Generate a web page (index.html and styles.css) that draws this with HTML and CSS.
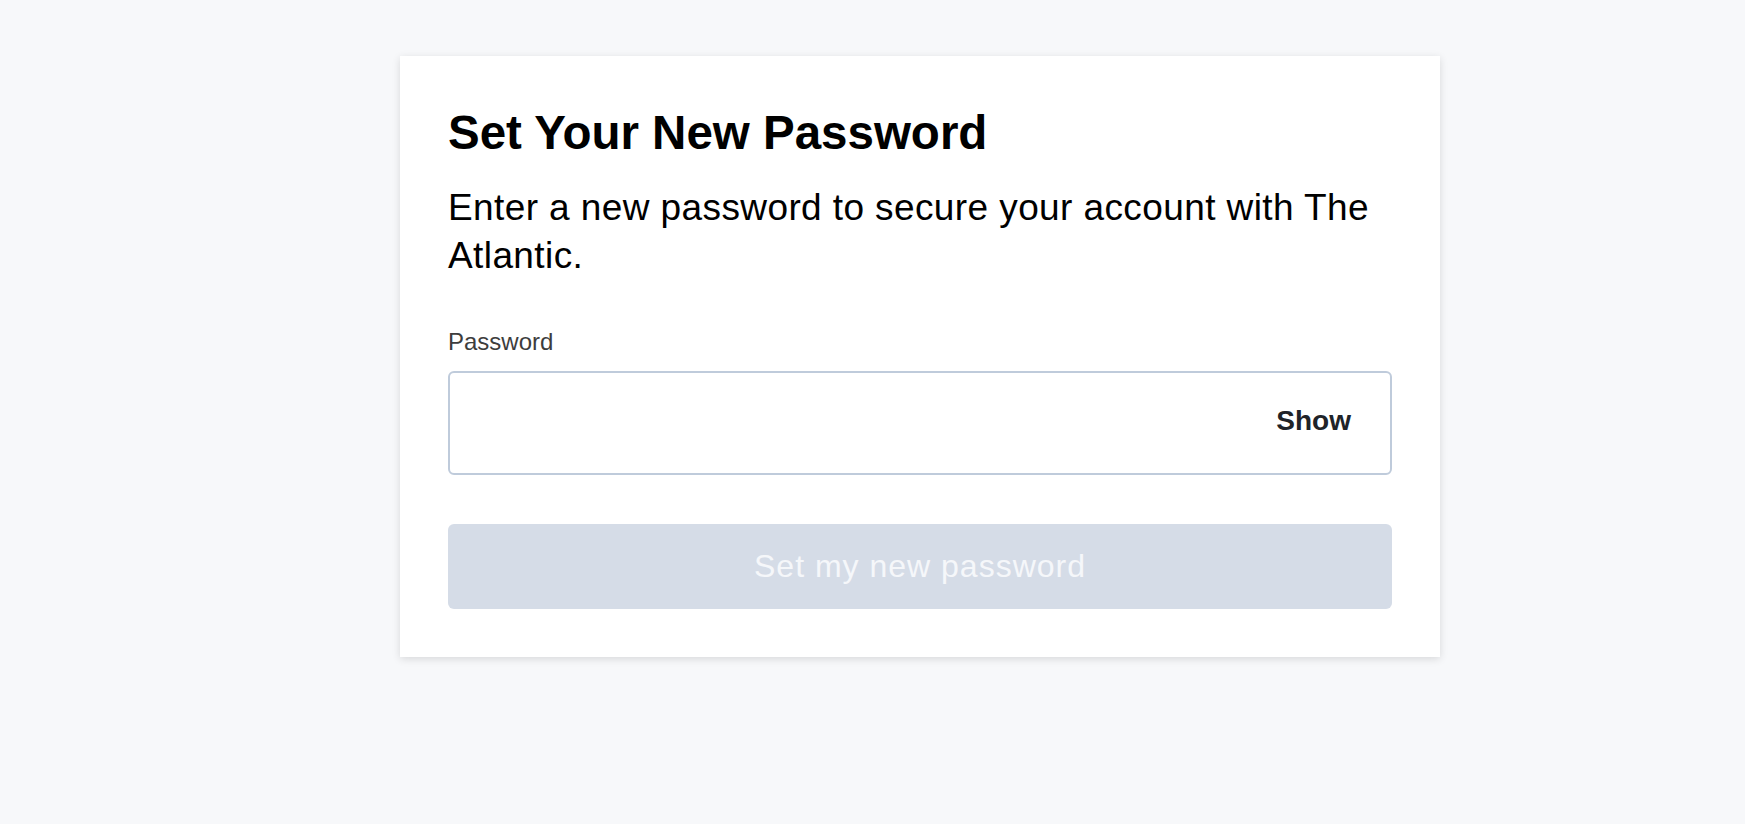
FILE: index.html
```html
<!DOCTYPE html>
<html lang="en">
<head>
<meta charset="utf-8">
<title>Set Your New Password</title>
<link rel="stylesheet" href="styles.css">
</head>
<body>
<main class="page">
  <section class="card">
    <h1 class="title">Set Your New Password</h1>
    <p class="lead">Enter a new password to secure your account with The Atlantic.</p>
    <form class="form">
      <label class="label" for="pw">Password</label>
      <div class="field">
        <input class="input" id="pw" type="password" autocomplete="new-password">
        <button class="show" type="button">Show</button>
      </div>
      <button class="submit" type="submit" disabled>Set my new password</button>
    </form>
  </section>
</main>
</body>
</html>
```
FILE: styles.css
```css
* { box-sizing: border-box; }
html, body { margin: 0; padding: 0; }
body {
  background: #f7f8fa;
  font-family: "Liberation Sans", Arial, sans-serif;
  color: #000;
  height: 824px;
}
.page {
  padding: 56px 0 0 400px;
}
.card {
  width: 1040px;
  background: #fff;
  padding: 48px;
  box-shadow: 0 2px 8px rgba(0, 0, 0, 0.13);
}
.title {
  margin: 0;
  font-size: 47.5px;
  line-height: 58px;
  font-weight: 700;
  letter-spacing: 0;
}
.lead {
  margin: 22px 0 0;
  font-size: 37px;
  line-height: 48px;
  letter-spacing: 0.4px;
}
.form {
  display: flex;
  flex-direction: column;
  margin-top: 48px;
}
.label {
  font-size: 24px;
  line-height: 28px;
  color: #3d3d3d;
}
.field {
  margin-top: 15px;
  height: 104px;
  display: flex;
  align-items: center;
  border: 2px solid #bfcbdb;
  border-radius: 6px;
  background: #fff;
}
.input {
  flex: 1;
  height: 100%;
  border: 0;
  outline: none;
  background: transparent;
  padding: 0 24px;
  font-size: 28px;
  font-family: inherit;
}
.show {
  border: 0;
  background: transparent;
  font-family: inherit;
  font-size: 28px;
  font-weight: 700;
  color: #202328;
  padding: 0 0 5px;
  margin-right: 39px;
}
.submit {
  margin-top: 49px;
  height: 85px;
  border: 0;
  border-radius: 6px;
  background: #d5dce7;
  color: #f5f7fa;
  font-family: inherit;
  font-size: 32px;
  letter-spacing: 1px;
}
```
